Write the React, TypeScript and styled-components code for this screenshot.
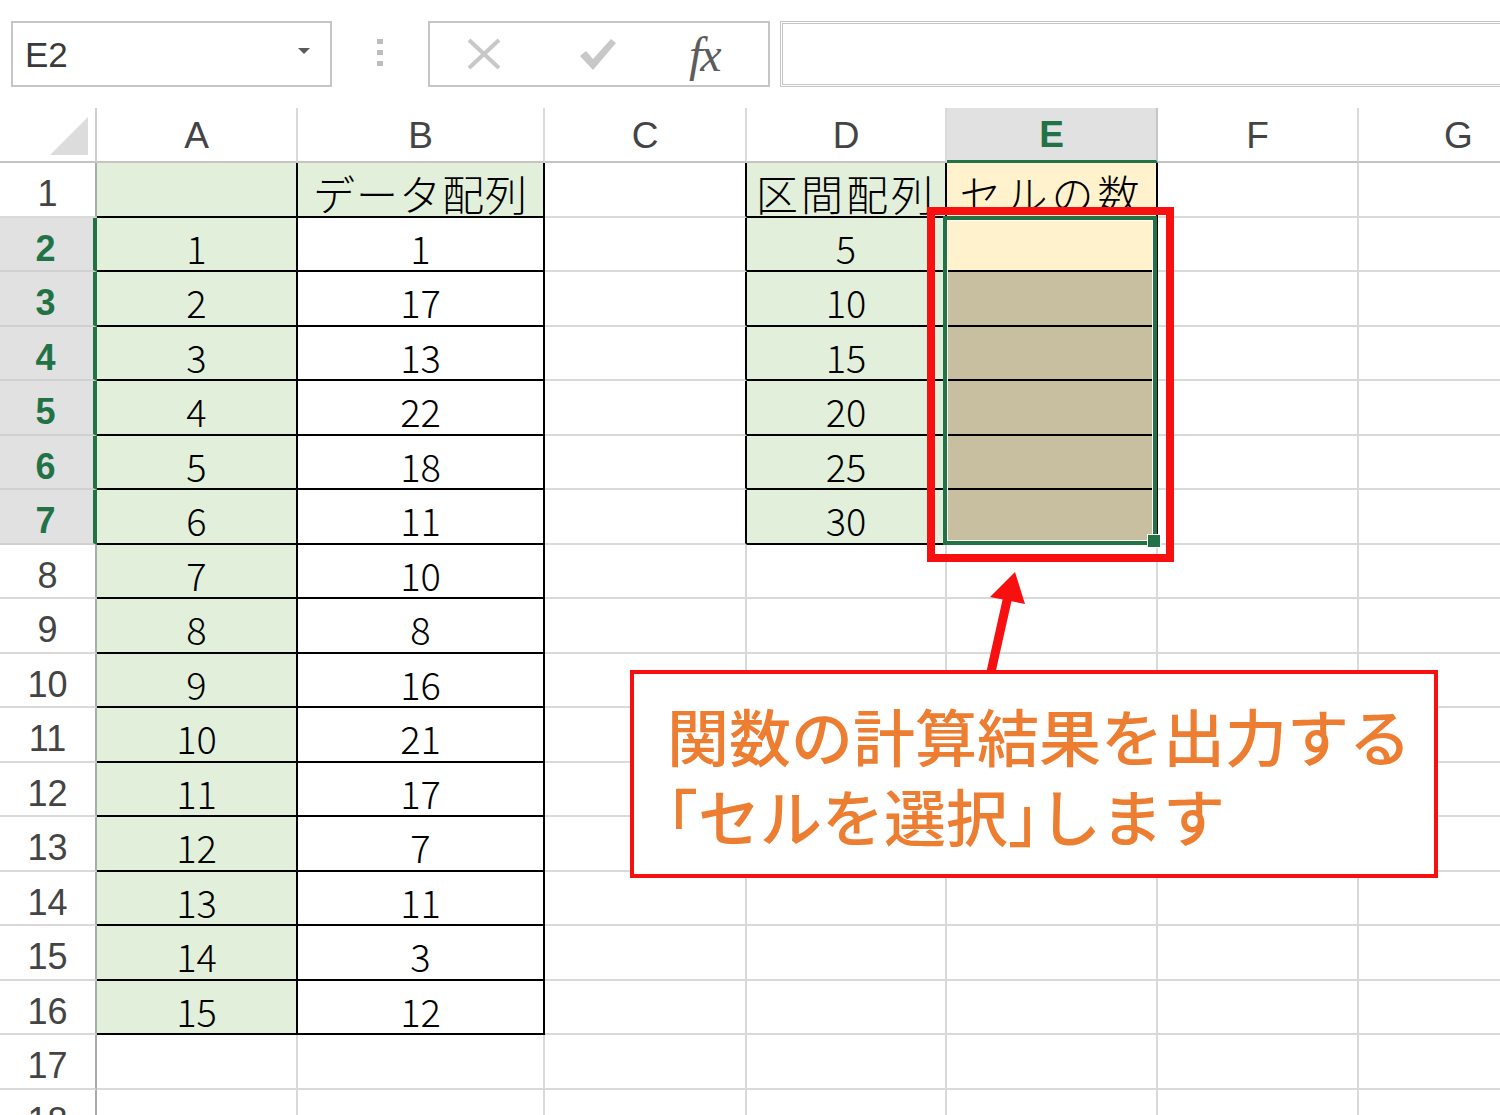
import React from "react";
import styled, { createGlobalStyle } from "styled-components";

const GlobalStyle = createGlobalStyle`
  html, body { margin: 0; padding: 0; background: #ffffff; }
  body { width: 1500px; height: 1115px; overflow: hidden; font-family: "Liberation Sans", Arial, sans-serif; }
  * { box-sizing: border-box; }
`;

const GRID = "#d9d9d9";
const GREEN_FILL = "#e2efda";
const YELLOW_FILL = "#fff2cc";
const TAN_FILL = "#c7bf9f";
const EXCEL_GREEN = "#217346";
const RED = "#f80f0f";

const Page = styled.div`
  position: relative;
  width: 1500px;
  height: 1115px;
  overflow: hidden;
  background: #fff;
`;

const TopBar = styled.div`
  height: 108px;
  padding-top: 21px;
  display: flex;
  align-items: flex-start;
  & > * { flex-shrink: 0; }
`;

const NameBox = styled.div`
  margin-left: 11px;
  width: 321px;
  height: 66px;
  border: 2px solid #c6c6c6;
  display: flex;
  align-items: center;
  justify-content: space-between;
  padding: 2px 20px 0 12px;
  font-family: "Liberation Sans", Arial, sans-serif;
  font-size: 35px;
  color: #3a3a3a;
`;

const DropArrow = styled.span`
  width: 0;
  height: 0;
  border-left: 6px solid transparent;
  border-right: 6px solid transparent;
  border-top: 6px solid #5a5a5a;
  margin-bottom: 9px;
`;

const Grip = styled.div`
  margin: 18px 45px 0 45px;
  width: 6px;
  display: flex;
  flex-direction: column;
  gap: 6px;
`;

const GripDot = styled.span`
  width: 6px;
  height: 5px;
  background: #bdbdbd;
`;

const FxBox = styled.div`
  width: 342px;
  height: 66px;
  border: 2px solid #c6c6c6;
  display: flex;
  align-items: center;
`;

const ToolIcon = styled.span<{ $ml: number }>`
  margin-left: ${(p) => p.$ml}px;
  display: flex;
  align-items: center;
`;

const FxText = styled.span`
  font-family: "Liberation Serif", "Times New Roman", serif;
  font-style: italic;
  font-size: 48px;
  color: #5c5c5c;
  line-height: 1;
  letter-spacing: -2px;
  margin-top: 2px;
`;

const FormulaInput = styled.div`
  margin-left: 10px;
  width: 740px;
  height: 66px;
  border: 3px double #c4c4c4;
`;

const SheetGrid = styled.div`
  display: grid;
  grid-template-columns: 97px 201px 247px 202px 200px 211px 201px 201px;
  grid-template-rows: 55px repeat(18, 54.5px);
`;

const Corner = styled.div`
  border-right: 2px solid #cfcfcf;
  border-bottom: 2px solid #c4c4c4;
  display: flex;
  align-items: flex-end;
  justify-content: flex-end;
  padding: 0 7px 6px 0;
`;

const CornerTriangle = styled.span`
  width: 38px;
  height: 38px;
  background: #dcdcdc;
  clip-path: polygon(100% 0, 100% 100%, 0 100%);
`;

const ColHeader = styled.div<{ $selected: boolean }>`
  border-right: 2px solid ${(p) => (p.$selected ? "#c6c6c6" : "#dadada")};
  border-bottom: ${(p) => (p.$selected ? `3px solid ${EXCEL_GREEN}` : "2px solid #c4c4c4")};
  background: ${(p) => (p.$selected ? "#e1e1e1" : "#ffffff")};
  color: ${(p) => (p.$selected ? EXCEL_GREEN : "#444444")};
  font-weight: ${(p) => (p.$selected ? 700 : 400)};
  font-family: "Liberation Sans", Arial, sans-serif;
  font-size: 37px;
  display: flex;
  align-items: center;
  justify-content: center;
  padding-top: 2px;
`;

const RowHeader = styled.div<{ $selected: boolean }>`
  border-right: ${(p) => (p.$selected ? `4px solid ${EXCEL_GREEN}` : "2px solid #ababab")};
  border-bottom: 2px solid ${(p) => (p.$selected ? "#d0d0d0" : GRID)};
  background: ${(p) => (p.$selected ? "#e1e1e1" : "#ffffff")};
  color: ${(p) => (p.$selected ? EXCEL_GREEN : "#444444")};
  font-weight: ${(p) => (p.$selected ? 700 : 400)};
  font-family: "Liberation Sans", Arial, sans-serif;
  font-size: 36px;
  line-height: 1;
  display: flex;
  align-items: center;
  justify-content: center;
  padding: 10px ${(p) => (p.$selected ? 2 : 0)}px 0 0;
`;

const Cell = styled.div<{
  $fill: string;
  $right: string;
  $bottom: string;
  $jp: boolean;
  $spacing: number;
}>`
  border-right: 2px solid ${(p) => p.$right};
  border-bottom: 2px solid ${(p) => p.$bottom};
  background: ${(p) => p.$fill};
  font-family: "Noto Sans CJK JP", "Noto Sans", sans-serif;
  font-weight: 300;
  font-size: ${(p) => (p.$jp ? 42 : 38)}px;
  letter-spacing: ${(p) => p.$spacing}px;
  line-height: 1;
  color: #000;
  display: flex;
  align-items: center;
  justify-content: center;
  padding-top: 8px;
  white-space: nowrap;
`;

const Selection = styled.div`
  position: absolute;
  left: 943px;
  top: 216px;
  width: 214px;
  height: 329px;
  border: 4px solid ${EXCEL_GREEN};
  box-shadow: inset 0 0 0 1px #ffffff;
  pointer-events: none;
`;

const FillHandle = styled.div`
  position: absolute;
  left: 1147px;
  top: 534px;
  width: 14px;
  height: 14px;
  background: ${EXCEL_GREEN};
  border: 1px solid #ffffff;
`;

const RedFrame = styled.div`
  position: absolute;
  left: 927px;
  top: 207px;
  width: 247px;
  height: 355px;
  border: 8px solid ${RED};
  pointer-events: none;
`;

const ArrowSvg = styled.svg`
  position: absolute;
  left: 970px;
  top: 560px;
  overflow: visible;
`;

const Callout = styled.div`
  position: absolute;
  left: 630px;
  top: 670px;
  width: 808px;
  height: 208px;
  border: 4px solid ${RED};
  background: #ffffff;
  padding: 21px 0 0 33px;
  font-family: "Noto Sans CJK JP", "Noto Sans", sans-serif;
  font-weight: 500;
  font-size: 62px;
  line-height: 80px;
  color: #ed7d31;
  white-space: nowrap;
`;

const CalloutLine = styled.div``;

const Bracket = styled.span`
  font-feature-settings: "halt";
`;

const COLS = ["A", "B", "C", "D", "E", "F", "G"];
const ROW_COUNT = 18;
const B_VALUES = [1, 17, 13, 22, 18, 11, 10, 8, 16, 21, 17, 7, 11, 3, 12];
const D_VALUES = [5, 10, 15, 20, 25, 30];

const bordered = (r: number, c: number): boolean =>
  ((c === 1 || c === 2) && r >= 1 && r <= 16) ||
  ((c === 4 || c === 5) && r >= 1 && r <= 7);

const fillOf = (r: number, c: number): string => {
  if (c === 1 && r >= 1 && r <= 16) return GREEN_FILL;
  if (c === 2 && r === 1) return GREEN_FILL;
  if (c === 4 && r >= 1 && r <= 7) return GREEN_FILL;
  if (c === 5 && (r === 1 || r === 2)) return YELLOW_FILL;
  if (c === 5 && r >= 3 && r <= 7) return TAN_FILL;
  return "#ffffff";
};

const textOf = (r: number, c: number): string => {
  if (c === 1 && r >= 2 && r <= 16) return String(r - 1);
  if (c === 2 && r === 1) return "データ配列";
  if (c === 2 && r >= 2 && r <= 16) return String(B_VALUES[r - 2]);
  if (c === 4 && r === 1) return "区間配列";
  if (c === 4 && r >= 2 && r <= 7) return String(D_VALUES[r - 2]);
  if (c === 5 && r === 1) return "セルの数";
  return "";
};

const spacingOf = (r: number, c: number): number => {
  if (r !== 1) return 0;
  if (c === 2) return 1;
  if (c === 4) return 3;
  if (c === 5) return 4;
  return 0;
};

const XIcon = () => (
  <svg width="36" height="32" viewBox="0 0 36 32">
    <path d="M3 2 L33 30 M33 2 L3 30" stroke="#c8c8c8" strokeWidth="4" fill="none" />
  </svg>
);

const CheckIcon = () => (
  <svg width="40" height="34" viewBox="0 0 40 34">
    <path d="M2 19 L8 14 L15 22 L33 2 L38 6 L15 33 Z" fill="#c8c8c8" />
  </svg>
);

export default function App() {
  const cells: React.ReactNode[] = [];
  cells.push(
    <Corner key="corner">
      <CornerTriangle />
    </Corner>
  );
  COLS.forEach((letter, i) => {
    cells.push(
      <ColHeader key={`h-${letter}`} $selected={i + 1 === 5}>
        {letter}
      </ColHeader>
    );
  });

  for (let r = 1; r <= ROW_COUNT; r++) {
    cells.push(
      <RowHeader key={`r-${r}`} $selected={r >= 2 && r <= 7}>
        {r}
      </RowHeader>
    );
    for (let c = 1; c <= COLS.length; c++) {
      const right = bordered(r, c) || bordered(r, c + 1) ? "#000" : GRID;
      const bottom = bordered(r, c) || bordered(r + 1, c) ? "#000" : GRID;
      cells.push(
        <Cell
          key={`c-${r}-${c}`}
          $fill={fillOf(r, c)}
          $right={right}
          $bottom={bottom}
          $jp={r === 1}
          $spacing={spacingOf(r, c)}
        >
          {textOf(r, c)}
        </Cell>
      );
    }
  }

  return (
    <Page>
      <GlobalStyle />
      <TopBar>
        <NameBox>
          <span>E2</span>
          <DropArrow />
        </NameBox>
        <Grip>
          <GripDot />
          <GripDot />
          <GripDot />
        </Grip>
        <FxBox>
          <ToolIcon $ml={36}>
            <XIcon />
          </ToolIcon>
          <ToolIcon $ml={76}>
            <CheckIcon />
          </ToolIcon>
          <ToolIcon $ml={71}>
            <FxText>fx</FxText>
          </ToolIcon>
        </FxBox>
        <FormulaInput />
      </TopBar>
      <SheetGrid>{cells}</SheetGrid>
      <Selection />
      <FillHandle />
      <RedFrame />
      <ArrowSvg width="70" height="115" viewBox="0 0 70 115">
        <line x1="21" y1="112" x2="38" y2="36" stroke={RED} strokeWidth="9" />
        <polygon points="45,12 20,37 55,44" fill={RED} />
      </ArrowSvg>
      <Callout>
        <CalloutLine>関数の計算結果を出力する</CalloutLine>
        <CalloutLine>
          <Bracket>「</Bracket>セルを選択<Bracket>」</Bracket>します
        </CalloutLine>
      </Callout>
    </Page>
  );
}
